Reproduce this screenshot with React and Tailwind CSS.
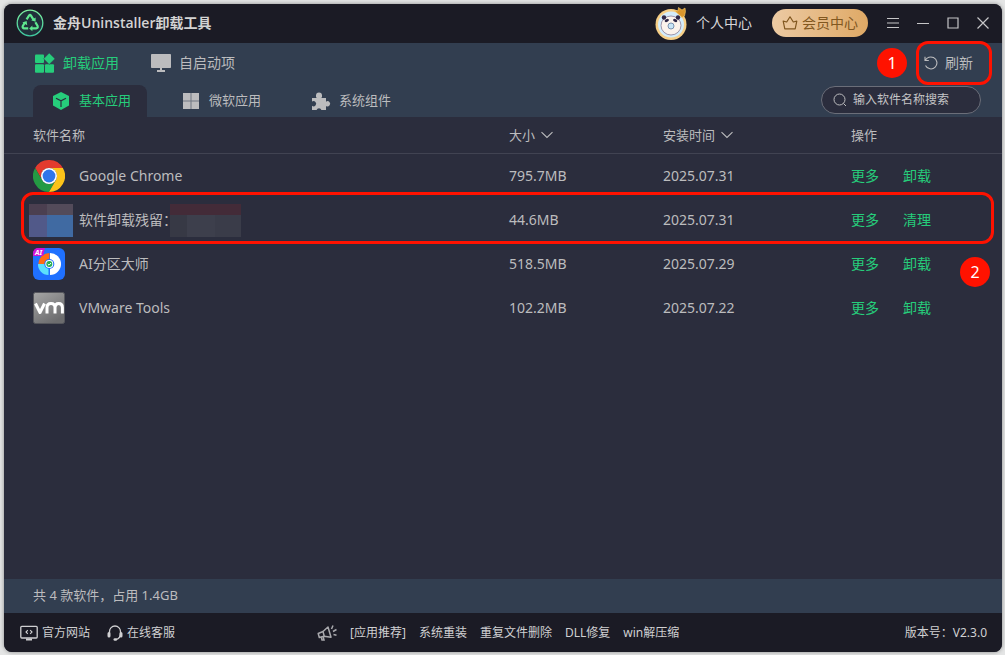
import React, { useState } from "react";

const apps = [
  { name: "Google Chrome", icon: "chrome", size: "795.7MB", date: "2025.07.31", action: "卸载" },
  { name: "软件卸载残留：", icon: "mosaic", size: "44.6MB", date: "2025.07.31", action: "清理", marked: true },
  { name: "AI分区大师", icon: "partition", size: "518.5MB", date: "2025.07.29", action: "卸载" },
  { name: "VMware Tools", icon: "vmware", size: "102.2MB", date: "2025.07.22", action: "卸载" },
];

const recommended = ["系统重装", "重复文件删除", "DLL修复", "win解压缩"];

function LogoIcon() {
  return (
    <svg className="w-7 h-7 shrink-0" viewBox="0 0 28 28" fill="none">
      <defs>
        <linearGradient id="logo" x1="0" y1="0" x2="0" y2="1">
          <stop offset="0" stopColor="#7ef0a0" />
          <stop offset="1" stopColor="#3fc9a0" />
        </linearGradient>
      </defs>
      <circle cx="14" cy="14" r="12.8" fill="#20303a" stroke="url(#logo)" strokeWidth="1.3" />
      <g stroke="#5fe88f" strokeWidth="2.2">
        <path d="M10.6 10.4 13 6.600q1-1.400 2 0l2.600 4.300" />
        <path d="M19.400 13.200l2.200 3.800q.7 2.200-1.500 2.400h-4.300" />
        <path d="M12.200 19.400H8q-2-.4-1.200-2.400l2.200-3.800" />
      </g>
      <g fill="#5fe88f">
        <path d="M19.600 8.400v4.400l-4.400-1.600z" />
        <path d="M16.400 16.600v5.600l-3.200-2.800z" />
        <path d="M6.400 13.400l4.200-1.400.6 4.200z" />
      </g>
    </svg>
  );
}

function AvatarIcon() {
  return (
    <svg className="w-9 h-9 shrink-0" viewBox="0 0 36 36">
      <circle cx="17" cy="19.500" r="15.500" fill="#f6cf87" />
      <circle cx="17" cy="19.500" r="13" fill="#d3ecfb" />
      <ellipse cx="17" cy="20.500" rx="10" ry="9.500" fill="#fbf3ec" stroke="#8a7d98" strokeWidth=".8" />
      <circle cx="10" cy="12.500" r="2.200" fill="#2e2746" />
      <circle cx="24" cy="12.500" r="2.200" fill="#2e2746" />
      <ellipse cx="12.800" cy="15.500" rx="2.200" ry="1.500" fill="#2e2746" transform="rotate(-25 12.800 15.500)" />
      <ellipse cx="21.200" cy="15.500" rx="2.200" ry="1.500" fill="#2e2746" transform="rotate(25 21.200 15.500)" />
      <circle cx="17" cy="21" r="3" fill="#c9e6f7" stroke="#6e88a8" strokeWidth=".9" />
      <path d="M20.500 5.500l3.500.500.500-3.500 3.500 2.500 3-2 .500 3.500-1 4.500-2.500 1.500z" fill="#d9962c" stroke="#f8cf6c" strokeWidth=".6" />
    </svg>
  );
}

function CrownIcon() {
  return (
    <svg className="w-4 h-4" viewBox="0 0 16 16" fill="none" stroke="currentColor" strokeWidth="1.200" strokeLinejoin="round">
      <path d="M1.200 6.200 4.700 7 8 1.800 11.300 7l3.500-.8-1.600 7.600H2.800z" />
    </svg>
  );
}

function BlocksIcon() {
  return (
    <svg className="w-5 h-5" viewBox="0 0 20 20" fill="currentColor">
      <rect x="0" y="1.500" width="9" height="8.500" rx="1" />
      <rect x="0" y="11.200" width="9" height="8.500" rx="1" />
      <rect x="10" y="11.200" width="9" height="8.500" rx="1" />
      <path d="M14.200 0 20 5.800 14.200 11.400 8.600 5.800z" stroke="#323e50" strokeWidth=".5" />
    </svg>
  );
}

function MonitorIcon() {
  return (
    <svg className="w-5 h-5" viewBox="0 0 20 20" fill="currentColor">
      <rect x="0" y="1" width="20" height="14" rx=".8" />
      <path d="M9 15h2v2h3v2H6v-2h3z" />
    </svg>
  );
}

function CubeIcon() {
  return (
    <svg className="w-4 h-[18px]" viewBox="0 0 16 18">
      <path d="M8 0 16 4v9.500L8 18 0 13.500V4z" fill="currentColor" />
      <path d="M3 6.200 8 8.800l5-2.600M8 8.800V15" fill="none" stroke="#2b2d3d" strokeWidth="1.200" />
    </svg>
  );
}

function WindowsIcon() {
  return (
    <svg className="w-4 h-4" viewBox="0 0 16 16" fill="currentColor">
      <path d="M0 0h16v16H0z" opacity=".45" />
      <path d="M0 0h7.500v7.500H0zM8.500 0H16v7.500H8.500zM0 8.500h7.500V16H0zM8.500 8.500H16V16H8.500z" />
    </svg>
  );
}

function PuzzleIcon() {
  return (
    <svg className="w-4 h-[18px] overflow-visible" viewBox="1 0 16 18" fill="currentColor">
      <path d="M0 6h4.700A3 3 0 0 1 4 3.400a3 3 0 0 1 6 0A3 3 0 0 1 9.300 6H14v3.700a2.600 2.600 0 1 1 0 4.200V18H9.400a2.500 2.500 0 0 0-4.800 0H0v-4.200a2.600 2.600 0 1 0 0-4.200z" />
    </svg>
  );
}

function RefreshIcon() {
  return (
    <svg className="w-[14px] h-[14px]" viewBox="0 0 14 14" fill="none" stroke="currentColor" strokeWidth="1.100">
      <path d="M1 .800v3.700h3.800M1.300 4.300C3 1.300 6.500.300 9.500 1.500a6 6 0 1 1-8 8" />
    </svg>
  );
}

function SearchIcon() {
  return (
    <svg className="w-[14px] h-[14px] shrink-0" viewBox="0 0 14 14" fill="none" stroke="currentColor">
      <circle cx="6.500" cy="6.500" r="5.500" />
      <path d="m10.500 10.500 2.500 2.500" />
    </svg>
  );
}

function SortIcon() {
  return (
    <svg className="w-3 h-2" viewBox="0 0 12 8" fill="none" stroke="currentColor" strokeWidth="1.100">
      <path d="m.500 1.200 5.500 5.300 5.500-5.300" />
    </svg>
  );
}

function AppIcon({ type }) {
  switch (type) {
    case "chrome":
      return (
        <svg className="w-8 h-8" viewBox="0 0 32 32">
          <path d="M2.140 8A16 16 0 0 1 29.860 8H16a8 8 0 0 0-6.930 12z" fill="#e33b2e" />
          <path d="M2.140 8A16 16 0 0 0 16 32l6.930-12a8 8 0 0 1-13.860 0z" fill="#249a43" />
          <path d="M29.860 8A16 16 0 0 1 16 32l6.930-12A8 8 0 0 0 16 8z" fill="#fcc31a" />
          <circle cx="16" cy="16" r="8" fill="#fff" />
          <circle cx="16" cy="16" r="6.400" fill="#2f75ea" />
        </svg>
      );
    case "mosaic":
      return (
        <div className="-ml-1 w-11 h-[33px] grid grid-cols-[18px_26px] grid-rows-[11px_22px]">
          <div className="bg-[#4b3f50]" />
          <div className="bg-[#534b5a]" />
          <div className="bg-[#515989]" />
          <div className="bg-[#406aa2]" />
        </div>
      );
    case "partition":
      return (
        <svg className="w-8 h-8" viewBox="0 0 32 32">
          <rect width="32" height="32" rx="6" fill="#1f70ff" />
          <path d="M17 5a11 11 0 0 1 0 22z" fill="#fff" />
          <path d="M16 16H5.500A11 11 0 0 1 16.500 5z" fill="#ff6a13" />
          <path d="M15.500 16v11A10.500 10.500 0 0 1 5 16z" fill="#5ce1fb" />
          <circle cx="16.300" cy="16" r="5" fill="#1f70ff" />
          <circle cx="16.300" cy="16" r="4" fill="#fff" />
          <circle cx="16.300" cy="16" r="3" fill="#25ad50" />
          <path d="m14.800 16 1.200 1.200 2-2.200" stroke="#fff" fill="none" />
          <path d="M5 0h7L10 8H0V5a5 5 0 0 1 5-5z" fill="#d111d5" />
          <text x="2" y="7" fontSize="7" fontWeight="700" fontStyle="italic" fill="#fff">AI</text>
        </svg>
      );
    default:
      return (
        <svg className="w-8 h-8" viewBox="0 0 32 32">
          <defs>
            <linearGradient id="vm" x1="0" y1="0" x2=".6" y2="1">
              <stop offset="0" stopColor="#a6a6a6" />
              <stop offset="1" stopColor="#6c6c6e" />
            </linearGradient>
          </defs>
          <rect x=".500" y=".500" width="31" height="31" rx="2" fill="url(#vm)" stroke="#56575d" />
          <path
            d="M2.500 11.500 7 20.500l4.500-9M14 21.500v-6q0-4 4-4t4 4v6m0-6q0-4 3.700-4t3.700 4v6"
            fill="none"
            stroke="#fff"
            strokeWidth="3"
            strokeLinejoin="round"
          />
        </svg>
      );
  }
}

function WebsiteIcon() {
  return (
    <svg className="w-[18px] h-4" viewBox="0 0 18 16" fill="none" stroke="currentColor">
      <rect x=".800" y="1.300" width="16.400" height="11.700" rx="1" strokeWidth="1.300" />
      <path d="M7.800 5.200 6 7l1.800 1.800M10.200 5.200 12 7l-1.800 1.800" strokeWidth="1.100" />
      <path d="M6 14.500h6" strokeWidth="2" />
    </svg>
  );
}

function HeadsetIcon() {
  return (
    <svg className="w-4 h-4" viewBox="0 0 16 16" fill="none" stroke="currentColor">
      <path d="M2.500 8V6.500a5.500 5.500 0 0 1 11 0V8q0 5.500-4.500 6.500" strokeWidth="1.300" />
      <path d="M2 8.500v2.500M14 8.500v2.500" strokeWidth="3" strokeLinecap="round" />
      <path d="M7.800 14.500h1" strokeWidth="2.600" strokeLinecap="round" />
    </svg>
  );
}

function MegaphoneIcon() {
  return (
    <svg className="w-5 h-4" viewBox="0 0 20 16" fill="none" stroke="#a9a9ad" strokeWidth="1.500">
      <path d="M1.200 8.500 6 6.500 11 2l3 10.300-7-1.100-4.700 1.300z" strokeLinejoin="round" />
      <path d="M6 6.500 7.200 11M4.300 12.300l.7 2.700h2l-.800-3" />
      <path d="M14.500 4 16 .500M16 6.500l3.500-2M16.500 9.500l3 .700" />
    </svg>
  );
}

function Marker({ children, className }) {
  return (
    <span
      className={`absolute flex items-center justify-center w-[30px] h-[30px] rounded-full bg-[#ff1200] text-base text-white ${className}`}
    >
      {children}
    </span>
  );
}

function WindowButton({ label, path }) {
  return (
    <button aria-label={label}>
      <svg className="w-3 h-3" viewBox="0 0 12 12" fill="none" stroke="currentColor" strokeWidth="1.200">
        <path d={path} />
      </svg>
    </button>
  );
}

function TitleBar() {
  return (
    <header className="flex items-center justify-between h-[39px] shrink-0 bg-[#1b1b25] pl-3 pr-[13px] pb-0.5">
      <div className="flex items-center gap-[9px]">
        <LogoIcon />
        <h1 className="text-sm font-semibold font-['Open_Sans','Noto_Sans_CJK_SC',sans-serif] text-[#d3d3d3]">
          金舟Uninstaller卸载工具
        </h1>
      </div>
      <div className="flex items-center">
        <button className="flex items-center gap-1.5 text-sm text-[#d6d6d8]">
          <AvatarIcon />
          个人中心
        </button>
        <button className="ml-5 flex items-center gap-1 h-7 px-2.5 rounded-full bg-linear-to-r from-[#eccaa3] to-[#dfa965] text-sm text-[#81571f]">
          <CrownIcon />
          会员中心
        </button>
        <div className="ml-[19px] flex items-center gap-[18px] text-[#c6c6c8]">
          <WindowButton label="菜单" path="M0 1.500h12M0 6h12M0 10.500h12" />
          <WindowButton label="最小化" path="M0 6.500h12" />
          <WindowButton label="最大化" path="M1 1h10v10H1z" />
          <WindowButton label="关闭" path="M.500.500l11 11M11.500.500l-11 11" />
        </div>
      </div>
    </header>
  );
}

function App() {
  const [tab, setTab] = useState("基本应用");
  const tabs = [
    { label: "基本应用", icon: <CubeIcon /> },
    { label: "微软应用", icon: <WindowsIcon /> },
    { label: "系统组件", icon: <PuzzleIcon /> },
  ];

  return (
    <div className="h-screen bg-[#e4e5e5] pt-1 pl-1 pr-[3px] pb-[3px] font-['Noto_Sans','Noto_Sans_CJK_SC',sans-serif]">
      <div className="h-full flex flex-col overflow-hidden rounded-lg bg-[#2b2d3d] text-[#bcbcbe] shadow-[0_0_4px_rgba(0,0,0,0.4)]">
        <TitleBar />

        <div className="shrink-0 bg-[#323e50]">
          <div className="flex items-center justify-between h-10 pl-[31px] pr-[29px]">
            <nav className="flex items-center gap-8 text-sm">
              <button className="flex items-center gap-2 text-[#26cd7b]">
                <BlocksIcon />
                卸载应用
              </button>
              <button className="flex items-center gap-2">
                <MonitorIcon />
                自启动项
              </button>
            </nav>
            <div className="relative">
              <button className="flex items-center gap-[7px] text-sm">
                <RefreshIcon />
                刷新
              </button>
              <div className="absolute -left-2 -right-[19px] -top-3 -bottom-3 rounded-xl border-3 border-[#ff1200] pointer-events-none" />
              <Marker className="-left-[47px] -top-[5px]">1</Marker>
            </div>
          </div>
          <div className="flex items-end justify-between h-[34px] pl-[29px] pr-[21px]">
            <div className="flex gap-4">
              {tabs.map((item) => (
                <button
                  key={item.label}
                  onClick={() => setTab(item.label)}
                  className={`flex items-center gap-2.5 h-8 pl-5 pr-4 rounded-t-lg text-[13px] ${
                    tab === item.label ? "bg-[#2b2d3d] text-[#26cd7b]" : ""
                  }`}
                >
                  {item.icon}
                  {item.label}
                </button>
              ))}
            </div>
            <label className="flex items-center gap-1.5 w-40 h-7 mb-[3px] pl-[11px] pr-3 rounded-full border border-[#6b6e79] bg-[#2b2d3d]">
              <SearchIcon />
              <input
                type="text"
                aria-label="搜索"
                placeholder="输入软件名称搜索"
                className="min-w-0 flex-1 bg-transparent text-xs outline-none placeholder:text-[#c4c4c6]"
              />
            </label>
          </div>
        </div>

        <main className="flex-1 min-h-0">
          <table className="w-full table-fixed border-separate border-spacing-0 text-left text-sm">
            <colgroup>
              <col />
              <col className="w-[154px]" />
              <col className="w-[188px]" />
              <col className="w-[151px]" />
            </colgroup>
            <thead>
              <tr className="h-[37px] text-[13px] *:border-b *:border-[#414352] *:font-normal">
                <th className="pl-[29px]">软件名称</th>
                <th>
                  <button className="flex items-center gap-1.5">
                    大小 <SortIcon />
                  </button>
                </th>
                <th>
                  <button className="flex items-center gap-1.5">
                    安装时间 <SortIcon />
                  </button>
                </th>
                <th>操作</th>
              </tr>
            </thead>
            <tbody>
              {apps.map((app) => (
                <tr key={app.name} className="relative h-11">
                  <td className="pl-[29px]">
                    <div className="flex items-center">
                      <div className="w-[46px] shrink-0">
                        <AppIcon type={app.icon} />
                      </div>
                      <span className={app.marked ? "w-[91px] whitespace-nowrap" : ""}>{app.name}</span>
                      {app.marked && (
                        <div className="relative grid grid-cols-[17px_28px_26px] grid-rows-[11px_22px]">
                          <div className="col-span-3 bg-[#432b38]" />
                          <div className="bg-[#373945]" />
                          <div className="bg-[#3d3f4c]" />
                          <div className="bg-[#3a3c49]" />
                        </div>
                      )}
                    </div>
                  </td>
                  <td>{app.size}</td>
                  <td>{app.date}</td>
                  <td>
                    <div className="flex gap-6 text-[#26cd7b]">
                      <button>更多</button>
                      <button>{app.action}</button>
                    </div>
                    {app.marked && (
                      <>
                        <div className="absolute left-[17px] right-2 -top-1.5 -bottom-0.5 rounded-xl border-3 border-[#ff1200] pointer-events-none" />
                        <Marker className="right-3 top-[59px]">2</Marker>
                      </>
                    )}
                  </td>
                </tr>
              ))}
            </tbody>
          </table>
        </main>

        <div className="flex items-center h-[34px] shrink-0 bg-[#323e50] pl-[29px] text-[13px]">
          共 4 款软件，占用 1.4GB
        </div>

        <footer className="flex items-center h-[39px] shrink-0 bg-[#1b1b25] pl-4 pr-[15px] text-xs text-[#d0d0d2]">
          <div className="flex items-center gap-[17px] w-[297px]">
            <a href="#site" className="flex items-center gap-1">
              <WebsiteIcon />
              官方网站
            </a>
            <a href="#service" className="flex items-center gap-1">
              <HeadsetIcon />
              在线客服
            </a>
          </div>
          <div className="flex items-center gap-[13px]">
            <MegaphoneIcon />
            <span>[应用推荐]</span>
            {recommended.map((name) => (
              <a key={name} href="#app">{name}</a>
            ))}
          </div>
          <span className="ml-auto">版本号：V2.3.0</span>
        </footer>
      </div>
    </div>
  );
}

export default App;
